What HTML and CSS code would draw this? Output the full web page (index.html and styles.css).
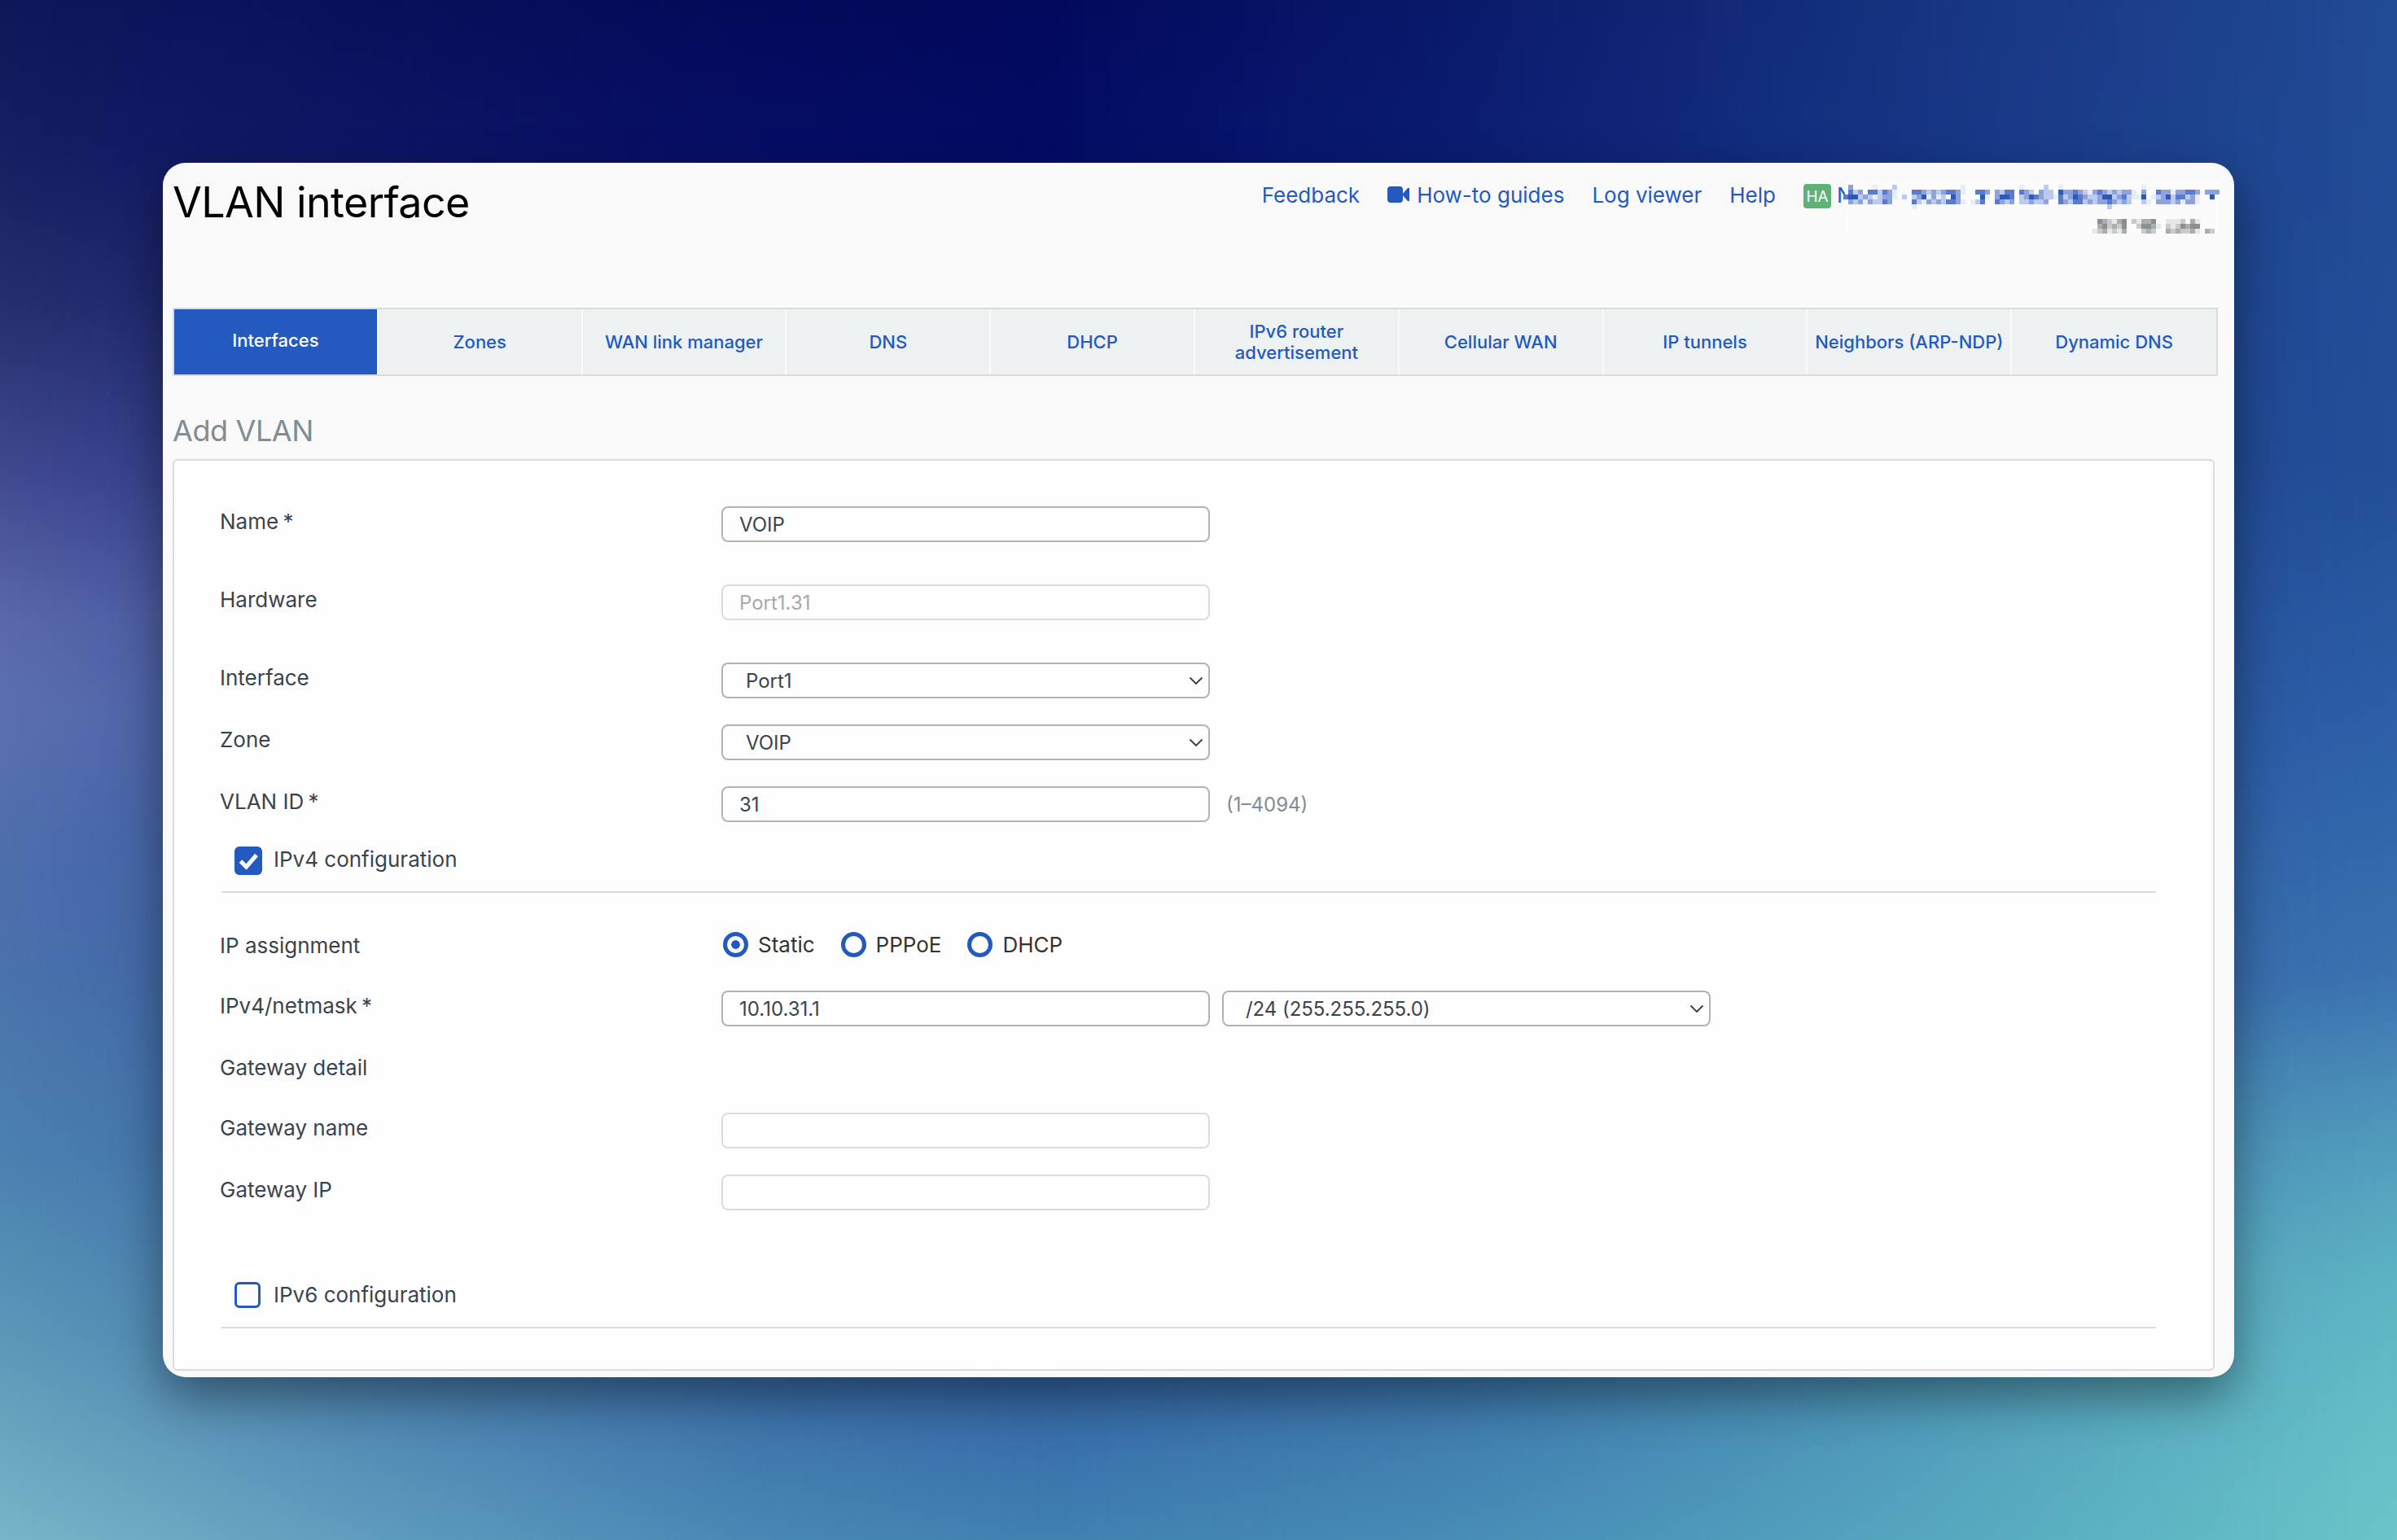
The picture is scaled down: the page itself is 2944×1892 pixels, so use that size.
FILE: index.html
```html
<!DOCTYPE html>
<html lang="en">
<head>
  <meta charset="UTF-8" />
  <meta name="viewport" content="width=device-width, initial-scale=1.0"/>
  <title>VLAN interface</title>
  <link rel="stylesheet" href="styles.css">
</head>
<body>
  <div class="bg bg-mid"></div>
  <div class="bg bg-left"></div>
  <div class="bg bg-right"></div>

  <div class="window">
    <!-- Header -->
    <div class="header">
      <h1>VLAN interface</h1>
      <div class="links">
        <a class="feedback">Feedback</a>
        <a class="guides">
          <svg width="27" height="20" viewBox="0 0 27 20"><rect width="19" height="20" rx="4"/><path d="M18 10 L25 2 Q27 1 27 3 V17 Q27 19 25 18 Z"/></svg>How-to guides</a>
        <a class="log">Log viewer</a>
        <a class="help">Help</a>
        <span class="ha">HA</span>
        <a class="account">N<svg class="mosaic" id="mosaic" width="464" height="69"></svg></a>
      </div>
    </div>

    <!-- Tabs -->
    <div class="tabs">
      <div class="tab active">Interfaces</div>
      <div class="tab">Zones</div>
      <div class="tab">WAN link manager</div>
      <div class="tab">DNS</div>
      <div class="tab">DHCP</div>
      <div class="tab">IPv6 router advertisement</div>
      <div class="tab">Cellular WAN</div>
      <div class="tab">IP tunnels</div>
      <div class="tab">Neighbors (ARP-NDP)</div>
      <div class="tab">Dynamic DNS</div>
    </div>

    <h2>Add VLAN</h2>

    <!-- Form -->
    <div class="panel">
      <div class="row tall">
        <label>Name <span class="req">*</span></label>
        <input type="text" value="VOIP">
      </div>
      <div class="row tall">
        <label>Hardware</label>
        <input type="text" value="Port1.31" disabled>
      </div>
      <div class="row">
        <label>Interface</label>
        <div class="select">
          <select><option>Port1</option></select>
          <svg width="18" height="11" viewBox="0 0 18 11"><path d="M1.5 1.5 L9 9 L16.5 1.5"/></svg>
        </div>
      </div>
      <div class="row">
        <label>Zone</label>
        <div class="select">
          <select><option>VOIP</option></select>
          <svg width="18" height="11" viewBox="0 0 18 11"><path d="M1.5 1.5 L9 9 L16.5 1.5"/></svg>
        </div>
      </div>
      <div class="row">
        <label>VLAN ID <span class="req">*</span></label>
        <input type="text" value="31">
        <span class="hint">(1–4094)</span>
      </div>

      <div class="section">
        <span class="check on"><svg width="34" height="35" viewBox="0 0 34 35"><path d="M7.5 18 L14.5 25 L27 10.5"/></svg></span>
        <span>IPv4 configuration</span>
      </div>

      <div class="row radios">
        <label>IP assignment</label>
        <span class="radio on"></span><span class="radio-text">Static</span>
        <span class="radio"></span><span class="radio-text">PPPoE</span>
        <span class="radio"></span><span class="radio-text">DHCP</span>
      </div>
      <div class="row">
        <label>IPv4/netmask <span class="req">*</span></label>
        <input type="text" value="10.10.31.1">
        <div class="select netmask">
          <select><option>/24 (255.255.255.0)</option></select>
          <svg width="18" height="11" viewBox="0 0 18 11"><path d="M1.5 1.5 L9 9 L16.5 1.5"/></svg>
        </div>
      </div>
      <div class="row detail">
        <label>Gateway detail</label>
      </div>
      <div class="row">
        <label>Gateway name</label>
        <input type="text" disabled>
      </div>
      <div class="row">
        <label>Gateway IP</label>
        <input type="text" disabled>
      </div>

      <div class="section last">
        <span class="check"></span>
        <span>IPv6 configuration</span>
      </div>
    </div>
  </div>

  <!-- Pixelated account name -->
  <script>
    const blue = ["", "#e6edfb", "#bdcaf0", "#8fa3da", "#5a7acb", "#2d5ab8"];
    const gray = ["", "#e6e7e8", "#c8cacc", "#abaeb0", "#8a8f92"];
    // [y, first column, palette, one character per 6px cell]
    const rows = [
      [7, 0, blue, ".3....1...2.............1...........1....2..1................1"],
      [13, 0, blue, ".423.442431...44323234431..443.3244.432.322.5334321343232331.3..433133443.333"],
      [19, 0, blue, "45523212331.2.2351312.53....51.3554.23543221423543223552342115.1235244231..5"],
      [25, 0, blue, ".323132243....42132324431.124..4323.223223..432442323343232..21.333231331"],
      [31, 14, blue, "1.......................................2"],
      [49, 52, gray, "432134.21334..1112.31"],
      [55, 52, gray, "342324..24431.2124344"],
      [61, 51, gray, "1231213...232..3232231.32"]
    ];
    let cells = '<rect x="2" width="460" height="69" fill="#fbfbfb"/>';
    rows.forEach(([y, start, colors, line]) => {
      [...line].forEach((c, i) => {
        if (c !== ".") cells += `<rect x="${(start + i) * 6}" y="${y}" width="6" height="6" fill="${colors[c]}"/>`;
      });
    });
    document.getElementById("mosaic").innerHTML = cells;
  </script>
</body>
</html>
```
FILE: styles.css
```css
* {
  box-sizing: border-box;
}

html, body {
  height: 100%;
  margin: 0;
}

body {
  position: relative;
  overflow: hidden;
  padding: 200px;
  font-family: Inter, "Liberation Sans", sans-serif;
  font-size: 26px;
  color: #3a444f;
}

/* Wallpaper */
.bg {
  position: absolute;
  inset: 0;
}

.bg-mid {
  background: linear-gradient(#02085a 0%, #030b66 10%, #1d3c8c 50%, #3260a2 88%, #4080b2 100%);
}

.bg-left {
  background: linear-gradient(#10165a 0%, #171e62 10%, #272f70 20%, #414a90 31%, #5a68aa 40%, #5c70b0 46%, #4f6eac 55%, #4a72ac 63%, #4c80b0 75%, #5c98b8 87%, #7ab4c8 100%);
  mask-image: linear-gradient(90deg, #000, rgba(0, 0, 0, 0.55) 15%, rgba(0, 0, 0, 0.15) 32%, transparent 45%);
}

.bg-right {
  background:
    radial-gradient(1300px 700px at 100% 100%, #69c5c8, rgba(105, 197, 200, 0.5) 45%, transparent),
    linear-gradient(#214b95 0%, #234f98 30%, #2e60a8 48%, #3c74b0 65%, #52a0be 83%, #5ab0c4 100%);
  mask-image: linear-gradient(270deg, #000, rgba(0, 0, 0, 0.75) 15%, rgba(0, 0, 0, 0.25) 40%, transparent 58%);
}

.window {
  position: relative;
  height: 1492px;
  padding: 0 20px 0 12px;
  background: #f9f9f9;
  border-radius: 28px;
  box-shadow: 0 24px 60px rgba(0, 0, 0, 0.42);
}

/* Header */
.header {
  display: flex;
  justify-content: space-between;
  height: 178px;
}

h1 {
  margin: 16px 0 0;
  font-size: 52px;
  font-weight: 400;
  letter-spacing: -0.6px;
  line-height: 65px;
  color: #000;
}

.links {
  display: flex;
  align-items: flex-start;
  margin-top: 24px;
  line-height: 32px;
  color: #2459bf;
}

.feedback,
.log,
.help {
  margin-right: 34px;
}

.guides {
  margin-right: 34px;
}

.guides svg {
  margin-right: 9px;
  fill: #2459bf;
}

.ha {
  width: 34px;
  height: 30px;
  margin: 2px 7px 0 0;
  border-radius: 4px;
  background: #5fb177;
  color: #fff;
  font-size: 19px;
  line-height: 31px;
  text-align: center;
}

.account {
  position: relative;
  width: 468px;
}

.mosaic {
  position: absolute;
  left: 8px;
  top: -4px;
}

/* Tabs */
.tabs {
  display: grid;
  grid-template-columns: repeat(10, 1fr);
  width: 2512px;
  height: 84px;
  border: 2px solid #d9dcdd;
  background: #eef1f2;
}

.tab {
  display: flex;
  align-items: center;
  justify-content: center;
  padding: 0 4px;
  border-right: 2px solid #fafafa;
  font-size: 22px;
  font-weight: 500;
  line-height: 26px;
  text-align: center;
  color: #2459bf;
}

.tab.active {
  padding-bottom: 4px;
  background: #2459bf;
  background-clip: padding-box;
  color: #fff;
}

.tab:last-child {
  border-right: none;
}

h2 {
  height: 102px;
  margin: 0;
  padding-top: 45px;
  font-size: 36px;
  font-weight: 400;
  letter-spacing: -0.4px;
  line-height: 44px;
  color: #838c90;
}

/* Form panel */
.panel {
  width: 2508px;
  height: 1120px;
  padding: 56px 70px 0 56px;
  background: #fefefe;
  border: 2px solid #dbdcde;
  border-radius: 6px;
}

.row {
  display: flex;
  height: 44px;
  margin-bottom: 32px;
}

.row.tall {
  margin-bottom: 52px;
}

.row label {
  width: 616px;
  line-height: 37px;
}

.req {
  margin-left: -2px;
}

input,
select {
  display: block;
  width: 600px;
  height: 44px;
  margin: 0;
  padding: 0 20px;
  border: 2px solid #b0b4b8;
  border-radius: 8px;
  background: #fefefe;
  font-family: inherit;
  font-size: 24px;
  color: #3a444f;
}

select {
  appearance: none;
  padding-left: 28px;
}

input:disabled {
  border-color: #dadcdf;
  color: #a8a8a8;
}

.select {
  position: relative;
}

.select svg {
  position: absolute;
  right: 8px;
  top: 17px;
  fill: none;
  stroke: #333c45;
  stroke-width: 1.8;
}

.netmask {
  margin-left: 15px;
}

.netmask select {
  padding-left: 27px;
  letter-spacing: -0.05px;
}

.hint {
  margin-left: 20px;
  font-size: 24px;
  line-height: 45px;
  color: #838c90;
}

.section {
  display: flex;
  height: 57px;
  margin: -2px 0 48px 2px;
  padding-left: 16px;
  border-bottom: 2px solid #dcdcdc;
  line-height: 31px;
}

.section.last {
  margin-top: 88px;
}

.check {
  width: 32px;
  height: 32px;
  margin-right: 16px;
  border: 3px solid #2459bf;
  border-radius: 6px;
}

.check.on {
  width: 34px;
  height: 35px;
  margin-right: 14px;
  border: none;
  background: #2459bf;
}

.check svg {
  display: block;
  fill: none;
  stroke: #fff;
  stroke-width: 5;
}

/* Radio group */
.row.radios {
  height: 30px;
  margin-bottom: 42px;
  line-height: 32px;
}

.radios label {
  line-height: 33px;
}

.radio {
  width: 31px;
  height: 31px;
  margin: 0 12px 0 2px;
  border: 5px solid #2459bf;
  border-radius: 50%;
}

.radio.on {
  background: radial-gradient(circle, #2459bf 5px, transparent 5.5px);
}

.radio-text {
  margin-right: 30px;
  color: #333;
}

.row.detail {
  height: 42px;
}
```
